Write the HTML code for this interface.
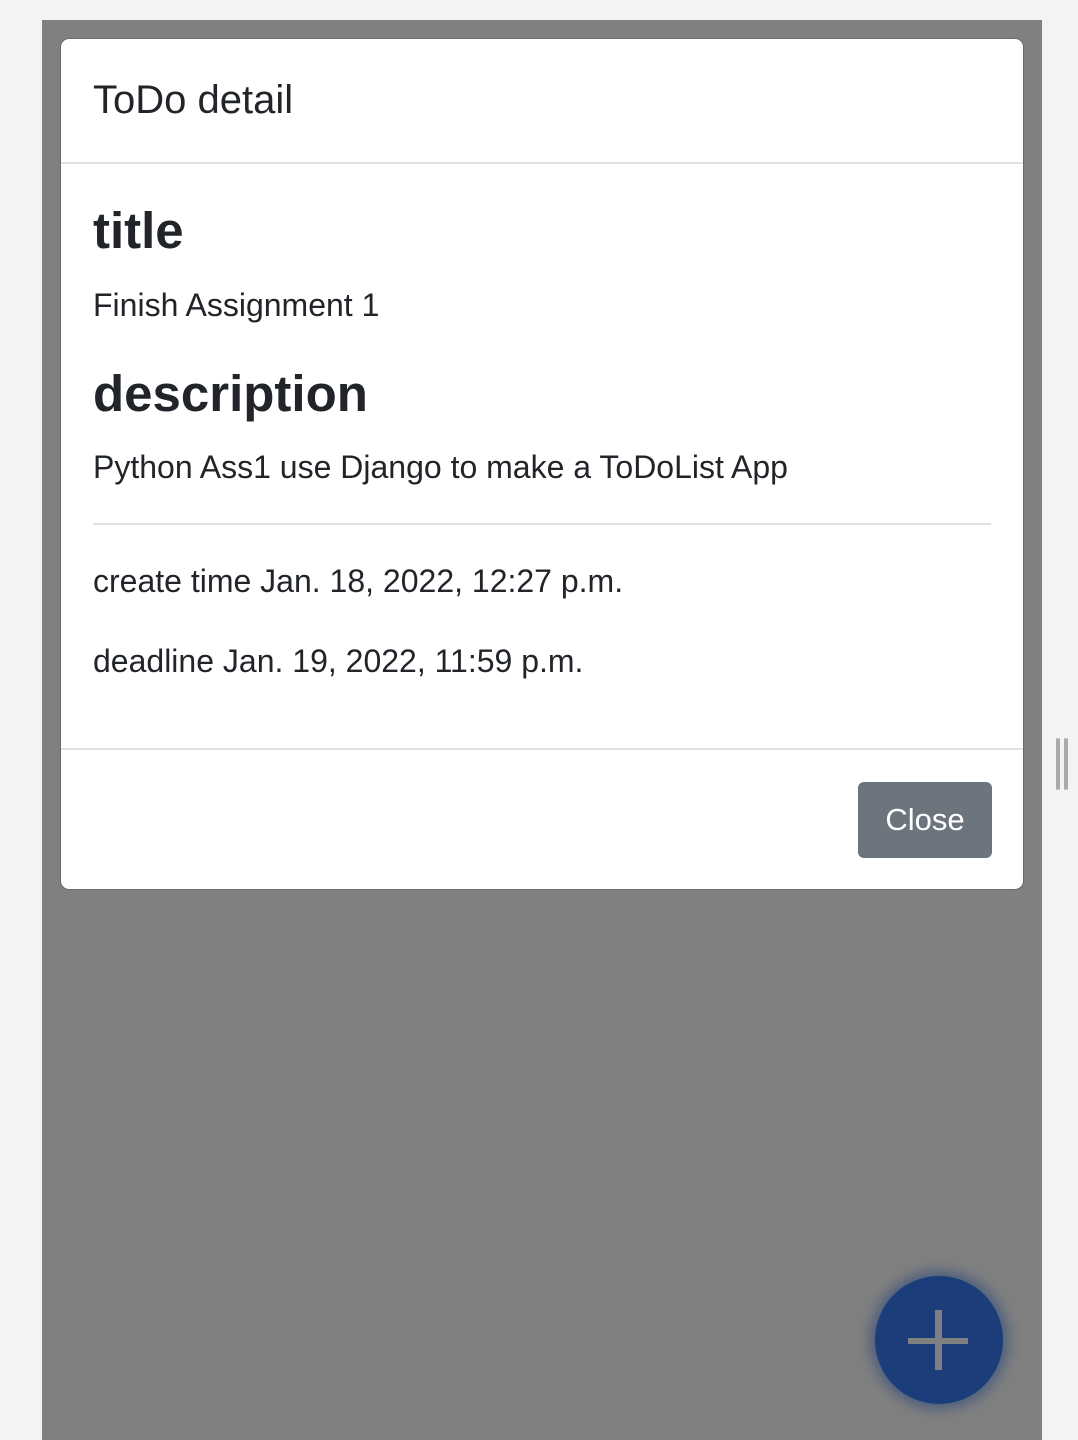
<!DOCTYPE html>
<html><head><style>
body{margin:0;width:1078px;height:1440px;background:#f2f3f5;position:relative;overflow:hidden;font-family:"Liberation Sans",sans-serif;color:#212529}
.bg{position:absolute;left:42px;top:20px;width:1000px;height:1420px;background:#808080}
.modal{position:absolute;left:60px;top:38px;width:962px;height:850px;background:#fff;border:1px solid #6a6a6a;border-radius:9px}
.hd{height:123px;border-bottom:2px solid #dee2e6;position:relative}
.hd span{position:absolute;left:32px;top:39px;font-size:40px}
.t{position:absolute;left:32px}
.ft{position:absolute;left:0;right:0;top:709px;border-top:2px solid #dee2e6}
.btn{position:absolute;left:797px;top:743px;width:134px;height:76px;background:#6c757d;border-radius:6px;color:#fff;font-size:31px;line-height:76px;text-align:center}
.fab{position:absolute;left:875px;top:1276px;width:128px;height:128px;border-radius:50%;background:#1b3d7a;box-shadow:0 0 14px 4px rgba(27,61,122,.6)}
</style></head><body>
<div class="bg"></div>
<div class="modal">
<div class="hd"><span>ToDo detail</span></div>
<div class="t" style="top:162px;font-size:51px;font-weight:bold">title</div>
<div class="t" style="top:248px;font-size:32px">Finish Assignment 1</div>
<div class="t" style="top:325px;font-size:51px;font-weight:bold">description</div>
<div class="t" style="top:410px;font-size:32px">Python Ass1 use Django to make a ToDoList App</div>
<div style="position:absolute;left:32px;right:32px;top:484px;border-top:2px solid #dee2e6"></div>
<div class="t" style="top:524px;font-size:32px">create time Jan. 18, 2022, 12:27 p.m.</div>
<div class="t" style="top:604px;font-size:32px">deadline Jan. 19, 2022, 11:59 p.m.</div>
<div class="ft"></div>
<div class="btn">Close</div>
</div>
<div class="fab"><div style="position:absolute;left:33px;top:62px;width:60px;height:6px;background:#808080"></div><div style="position:absolute;left:60px;top:34px;width:7px;height:60px;background:#808080"></div></div>
<div style="position:absolute;left:1056px;top:738px;width:4px;height:52px;background:#aaa;border-radius:2px"></div>
<div style="position:absolute;left:1064px;top:738px;width:4px;height:52px;background:#aaa;border-radius:2px"></div>
</body></html>
